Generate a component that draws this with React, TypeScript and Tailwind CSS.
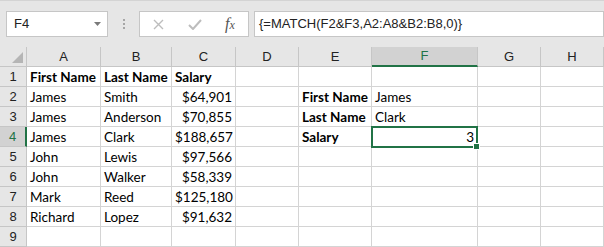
import React from 'react';

const cols = ['A', 'B', 'C', 'D', 'E', 'F', 'G', 'H'];

type Cell = { v?: string; bold?: boolean; right?: boolean };

const rows: Cell[][] = [
  [{ v: 'First Name', bold: true }, { v: 'Last Name', bold: true }, { v: 'Salary', bold: true }, {}, {}, {}, {}, {}],
  [{ v: 'James' }, { v: 'Smith' }, { v: '$64,901', right: true }, {}, { v: 'First Name', bold: true }, { v: 'James' }, {}, {}],
  [{ v: 'James' }, { v: 'Anderson' }, { v: '$70,855', right: true }, {}, { v: 'Last Name', bold: true }, { v: 'Clark' }, {}, {}],
  [{ v: 'James' }, { v: 'Clark' }, { v: '$188,657', right: true }, {}, { v: 'Salary', bold: true }, { v: '3', right: true }, {}, {}],
  [{ v: 'John' }, { v: 'Lewis' }, { v: '$97,566', right: true }, {}, {}, {}, {}, {}],
  [{ v: 'John' }, { v: 'Walker' }, { v: '$58,339', right: true }, {}, {}, {}, {}, {}],
  [{ v: 'Mark' }, { v: 'Reed' }, { v: '$125,180', right: true }, {}, {}, {}, {}, {}],
  [{ v: 'Richard' }, { v: 'Lopez' }, { v: '$91,632', right: true }, {}, {}, {}, {}, {}],
  [{}, {}, {}, {}, {}, {}, {}, {}],
];

function FormulaBar() {
  return (
    <div className="h-[47px] border-t border-[#d4d4d4] flex items-start pt-[10px] pl-[6px] font-['Liberation_Sans',sans-serif] text-[13px] text-[#222]">
      {/* name box */}
      <div className="w-[102px] h-[26px] bg-white border border-[#c6c6c6] flex items-center pl-[7px] pr-[6px]">
        <span className="flex-1">F4</span>
        <svg width="7" height="4" viewBox="0 0 7 4">
          <path d="M0 0h7L3.5 4z" fill="#7a7a7a" />
        </svg>
      </div>
      <div className="w-[31px] h-[26px] flex flex-col items-center justify-center gap-[2px]">
        <div className="w-[2px] h-[2px] bg-[#a6a6a6]" />
        <div className="w-[2px] h-[2px] bg-[#a6a6a6]" />
        <div className="w-[2px] h-[2px] bg-[#a6a6a6]" />
      </div>
      {/* cancel / enter / fx */}
      <div className="w-[110px] h-[26px] bg-white border border-[#c6c6c6] flex items-center">
        <svg className="ml-[13px]" width="11" height="11" viewBox="0 0 11 11">
          <path d="M1 1l9 9M10 1l-9 9" stroke="#bdbdbd" strokeWidth="1.4" fill="none" />
        </svg>
        <svg className="ml-[24px]" width="14" height="11" viewBox="0 0 14 11">
          <path d="M1 6l4 4 8-9" stroke="#bdbdbd" strokeWidth="2" fill="none" />
        </svg>
        <span className="ml-[23px] italic font-['Liberation_Serif',serif] text-[16px] text-[#555] leading-none">
          f<span className="text-[12px]">x</span>
        </span>
      </div>
      <div className="ml-[5px] flex-1 h-[26px] bg-white border border-[#c6c6c6] flex items-center pl-[4px]">
        {'{=MATCH(F2&F3,A2:A8&B2:B8,0)}'}
      </div>
    </div>
  );
}

export default function App() {
  return (
    <div className="w-[604px] h-[247px] overflow-hidden bg-[#e6e6e6]">
      <FormulaBar />
      <div className="grid grid-cols-[27px_74px_71px_64px_63px_73px_106px_63px_63px] bg-white">
        {/* header row */}
        <div className="h-[20px] bg-[#e6e6e6] border-r border-b border-[#c6c6c6] relative">
          <svg className="absolute left-[12px] top-[5px]" width="11" height="11" viewBox="0 0 11 11">
            <path d="M11 0v11H0z" fill="#b5b5b5" />
          </svg>
        </div>
        {cols.map((c) =>
          c === 'F' ? (
            <div
              key={c}
              className="h-[20px] bg-[#d2d2d2] border-r border-[#c6c6c6] border-b-2 border-b-[#217346] flex items-center justify-center font-['Liberation_Sans',sans-serif] text-[13px] text-[#217346]"
            >
              {c}
            </div>
          ) : (
            <div
              key={c}
              className="h-[20px] bg-[#e6e6e6] border-r border-b border-[#c6c6c6] flex items-center justify-center font-['Liberation_Sans',sans-serif] text-[13px] text-[#222]"
            >
              {c}
            </div>
          )
        )}

        {rows.map((row, ri) => (
          <React.Fragment key={ri}>
            <div
              className={
                ri === 3
                  ? "h-[20px] bg-[#d2d2d2] border-b border-[#c6c6c6] border-r-2 border-r-[#217346] flex items-center justify-center font-['Liberation_Sans',sans-serif] text-[13px] text-[#217346]"
                  : "h-[20px] bg-[#e6e6e6] border-r border-b border-[#c6c6c6] flex items-center justify-center font-['Liberation_Sans',sans-serif] text-[13px] text-[#222]"
              }
            >
              {ri + 1}
            </div>
            {row.map((cell, ci) => (
              <div
                key={ci}
                className={
                  'h-[20px] border-r border-b border-[#d4d4d4] px-[3px] font-[Lato,sans-serif] text-[13.5px] leading-[20px] text-black whitespace-nowrap relative ' +
                  (cell.bold ? 'font-bold ' : '') +
                  (cell.right ? 'text-right' : 'text-left')
                }
              >
                {cell.v}
                {ri === 3 && ci === 5 && (
                  <>
                    <div className="absolute z-10 left-[-1px] top-[-1px] w-[107px] h-[22px] border-2 border-[#217346]" />
                    <div className="absolute z-10 left-[101px] top-[16px] w-[7px] h-[7px] bg-[#217346] border border-white" />
                  </>
                )}
              </div>
            ))}
          </React.Fragment>
        ))}
      </div>
    </div>
  );
}
